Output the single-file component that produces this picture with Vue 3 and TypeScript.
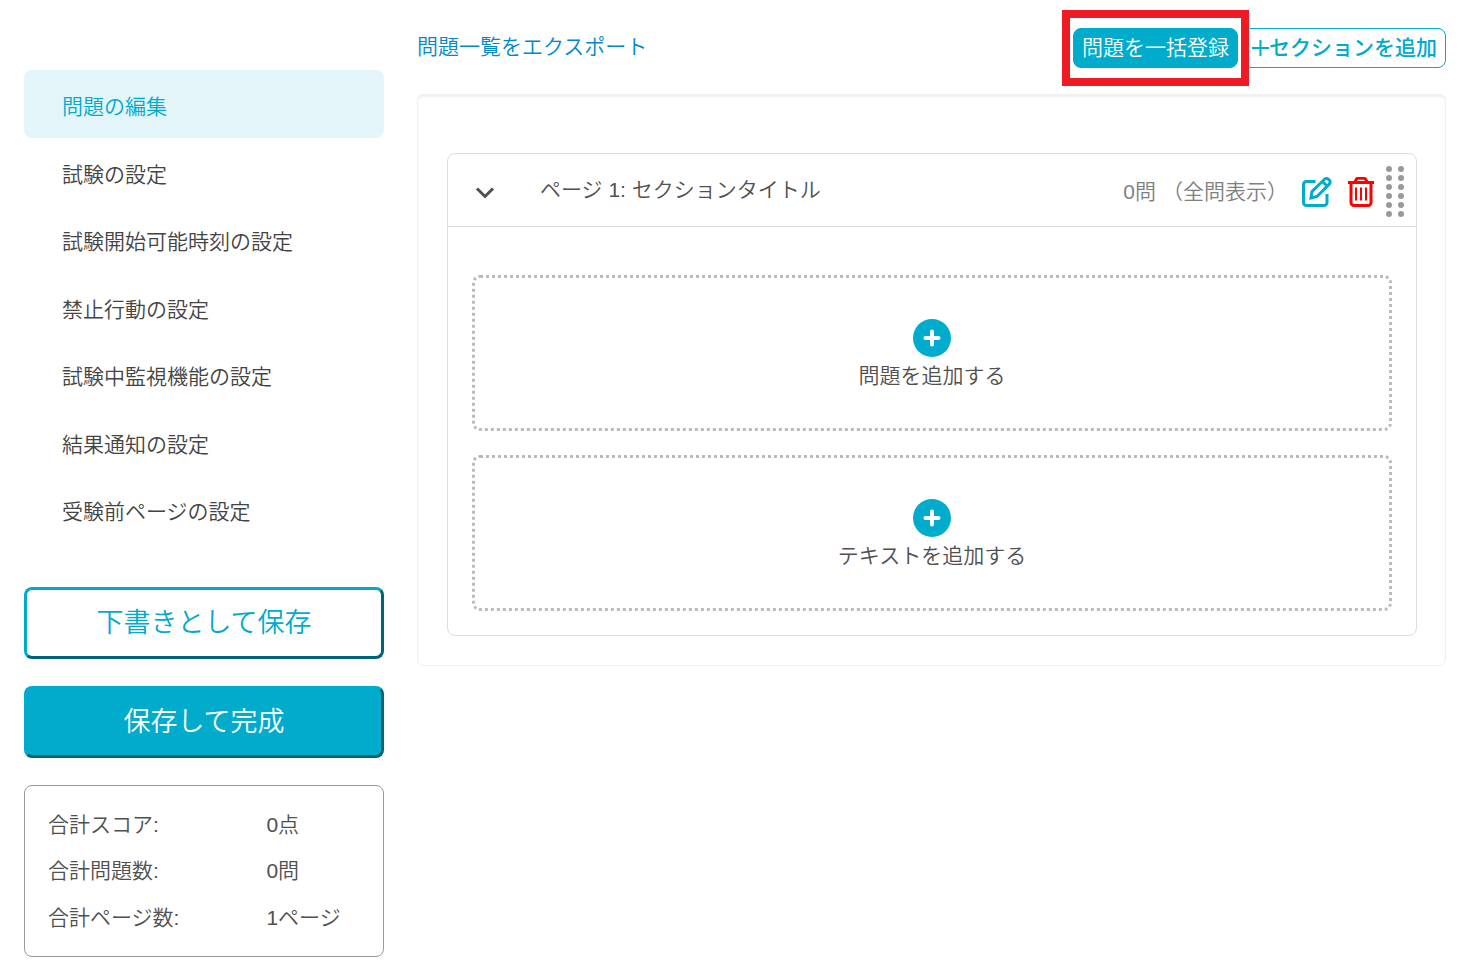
<script setup lang="ts">
import { ref } from 'vue'

const menu: string[] = [
  '問題の編集',
  '試験の設定',
  '試験開始可能時刻の設定',
  '禁止行動の設定',
  '試験中監視機能の設定',
  '結果通知の設定',
  '受験前ページの設定',
]
const active = ref(0)
const open = ref(true)

const totals: { label: string; value: string }[] = [
  { label: '合計スコア:', value: '0点' },
  { label: '合計問題数:', value: '0問' },
  { label: '合計ページ数:', value: '1ページ' },
]

const adders: string[] = ['問題を追加する', 'テキストを追加する']
const gripRows: number[] = [3, 12, 21, 30, 39, 48]
</script>

<template>
  <div class="page">
    <aside class="sidebar">
      <nav class="menu">
        <a
          v-for="(item, i) in menu"
          :key="item"
          href="#"
          :class="['menu-item', { active: i === active }]"
          @click.prevent="active = i"
        >{{ item }}</a>
      </nav>
      <div class="actions">
        <button type="button" class="save draft">下書きとして保存</button>
        <button type="button" class="save done">保存して完成</button>
      </div>
      <dl class="totals">
        <div v-for="t in totals" :key="t.label" class="total">
          <dt>{{ t.label }}</dt>
          <dd>{{ t.value }}</dd>
        </div>
      </dl>
    </aside>

    <main class="main">
      <header class="toolbar">
        <a href="#" class="export">問題一覧をエクスポート</a>
        <div class="tools">
          <div class="spotlight">
            <button type="button" class="tool filled">問題を一括登録</button>
          </div>
          <button type="button" class="tool outlined">
            <svg class="tool-plus" viewBox="0 0 17 17" aria-hidden="true">
              <path d="M8.5 0v16M0 8h17" />
            </svg>
            <span>セクションを追加</span>
          </button>
        </div>
      </header>

      <section class="panel">
        <article class="card">
          <header class="card-head">
            <button type="button" class="icon-button" aria-label="開閉" :aria-expanded="open" @click="open = !open">
              <svg class="chevron" viewBox="0 0 20 14" aria-hidden="true">
                <path d="M2 3.500 10 11.500 18 3.500" />
              </svg>
            </button>
            <h2 class="title">ページ 1: セクションタイトル</h2>
            <p class="count"><span>0問</span><span>（全問表示）</span></p>
            <button type="button" class="icon-button edit" aria-label="編集">
              <svg viewBox="0 0 30 30" aria-hidden="true">
                <path d="M13.500 4.500H4.500a3 3 0 0 0-3 3V25.500a3 3 0 0 0 3 3H22a3 3 0 0 0 3-3V17" />
                <path d="m9 21 1-6.500L22.500 2.300a2.800 2.800 0 0 1 4 0l.8.8a2.800 2.800 0 0 1 0 4L15 19.500 9 21ZM20.500 4.500l4.800 4.800" />
              </svg>
            </button>
            <button type="button" class="icon-button trash" aria-label="削除">
              <svg viewBox="0 0 26 30" aria-hidden="true">
                <path d="M0 5.500h26M3 5.500V25.500a3 3 0 0 0 3 3H20a3 3 0 0 0 3-3V5.500M7 5 8.200 2.500q.6-1.200 2-1.200h5.600q1.400 0 2 1.200L19 5" />
                <path class="thin" d="M8 10.500v13M13 10.500v13M18 10.500v13" />
              </svg>
            </button>
            <svg class="grip" viewBox="0 0 18 51" aria-hidden="true">
              <template v-for="y in gripRows" :key="y">
                <circle cx="3" :cy="y" r="3" />
                <circle cx="15" :cy="y" r="3" />
              </template>
            </svg>
          </header>
          <div v-if="open" class="card-body">
            <button v-for="a in adders" :key="a" type="button" class="adder">
              <svg class="add-icon" viewBox="0 0 38 38" aria-hidden="true">
                <circle cx="19" cy="19" r="19" />
                <path d="M19 12.500v13M12.500 19h13" />
              </svg>
              <span>{{ a }}</span>
            </button>
          </div>
        </article>
      </section>
    </main>
  </div>
</template>

<style>
body {
  margin: 0;
  background: #fff;
}
</style>

<style scoped>
.page {
  display: flex;
  align-items: flex-start;
  gap: 33px;
  padding: 28px 25px 17px 24px;
  font-family: "Liberation Sans", "Noto Sans CJK JP", sans-serif;
  font-size: 21px;
  font-weight: 350;
  line-height: 1.5;
  color: #505050;
}

button {
  margin: 0;
  font: inherit;
  color: inherit;
  cursor: pointer;
}

a {
  text-decoration: none;
}

.sidebar {
  flex: 0 0 360px;
  padding-top: 42px;
}

.menu {
  display: flex;
  flex-direction: column;
}

.menu-item {
  padding: 21px 38px 15px;
  border-radius: 8px;
  color: #444;
}

.menu-item.active {
  background: #e3f5f8;
  color: #00abcc;
}

.actions {
  display: flex;
  flex-direction: column;
  gap: 27px;
  margin-top: 44px;
}

.save {
  height: 72px;
  padding: 2px 0 0;
  border: 3px solid #00abcc;
  border-right-color: #006478;
  border-bottom-color: #006478;
  border-radius: 8px;
  font-size: 27px;
}

.draft {
  background: #fff;
  color: #00abcc;
}

.done {
  background: #00abcc;
  color: #fff;
}

.totals {
  display: flex;
  flex-direction: column;
  gap: 15px;
  margin: 27px 0 0;
  padding: 23px;
  border: 1px solid #999;
  border-radius: 8px;
}

.total {
  display: grid;
  grid-template-columns: 7fr 3fr;
}

.total dd {
  margin: 0;
}

.main {
  flex: 1;
  min-width: 0;
}

.toolbar {
  display: flex;
  justify-content: space-between;
}

.export {
  color: #0088cc;
  line-height: 38px;
}

.tools {
  display: flex;
  gap: 5px;
}

.spotlight {
  position: relative;
  z-index: 1;
}

.spotlight::after {
  content: "";
  position: absolute;
  inset: -18px -11px;
  border: 8px solid #ed1c24;
  pointer-events: none;
}

.tool {
  display: flex;
  align-items: center;
  height: 40px;
  padding: 0 8px;
  border: 1px solid #00abcc;
  border-radius: 8px;
}

.filled {
  background: #00abcc;
  color: #fff;
}

.outlined {
  background: #fff;
  color: #00abcc;
  font-weight: 500;
}

.tool-plus {
  width: 17px;
  height: 17px;
  fill: none;
  stroke: currentColor;
  stroke-width: 2;
}

.panel {
  margin-top: 26px;
  padding: 58px 28px 29px 29px;
  border: 1px solid #f0f0f0;
  border-radius: 6px;
  box-shadow: inset 0 2px 2px #f0f0f0;
}

.card {
  border: 1px solid #ddd;
  border-radius: 8px;
}

.card-head {
  display: flex;
  align-items: center;
  height: 69px;
  padding: 3px 12px 0 27px;
  border-bottom: 1px solid #ddd;
}

.icon-button {
  display: flex;
  padding: 0;
  border: 0;
  background: none;
}

.icon-button svg {
  fill: none;
  stroke: currentColor;
  stroke-width: 3;
}

.icon-button .chevron {
  width: 20px;
  height: 14px;
}

.title {
  flex: 1;
  margin: 0 0 4px 45px;
  font-size: 21px;
  font-weight: 350;
}

.count {
  display: flex;
  gap: 6px;
  margin: 0 14px 0 0;
  color: #808080;
}

.edit {
  color: #00abcc;
}

.edit svg {
  width: 30px;
  height: 30px;
}

.trash {
  margin: 0 12px 0 16px;
  color: #f00;
}

.trash svg {
  width: 26px;
  height: 30px;
}

.trash .thin {
  stroke-width: 2;
}

.grip {
  width: 18px;
  height: 51px;
  fill: #999;
}

.card-body {
  display: flex;
  flex-direction: column;
  gap: 24px;
  padding: 48px 24px 24px;
}

.adder {
  display: flex;
  flex-direction: column;
  align-items: center;
  gap: 3px;
  padding: 41px 24px 36px;
  border: 3px dotted #bbb;
  border-radius: 8px;
  background: none;
  line-height: 32px;
}

.add-icon {
  width: 38px;
  height: 38px;
  fill: #00abcc;
  stroke: none;
}

.add-icon path {
  fill: none;
  stroke: #fff;
  stroke-width: 4;
  stroke-linecap: round;
}
</style>
